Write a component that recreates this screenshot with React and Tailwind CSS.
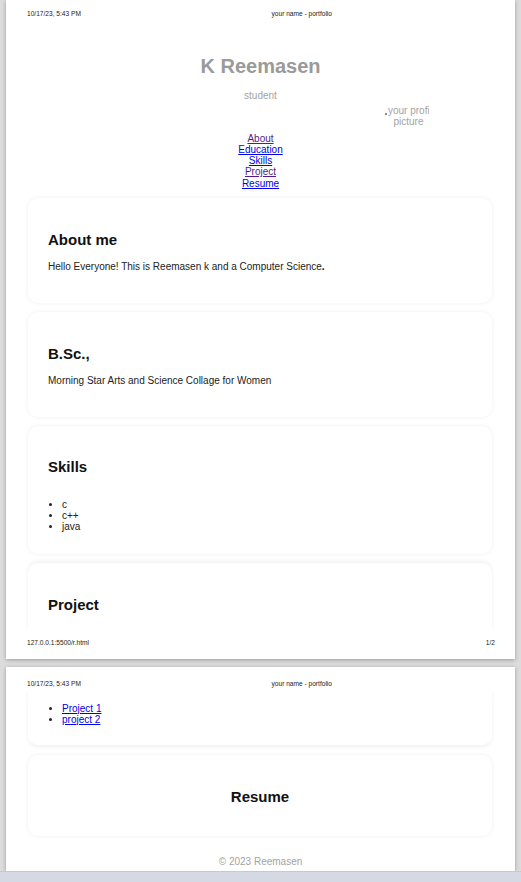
import React from "react";

const navLinks = [
    { label: "About", visited: true },
    { label: "Education", visited: false },
    { label: "Skills", visited: false },
    { label: "Project", visited: true },
    { label: "Resume", visited: false },
];

const skills = ["c", "c++", "java"];

function PrintHeader() {
    return (
        <div className="flex justify-between px-[21px] text-[6.6px] leading-[8px] text-[#222]">
            <span>10/17/23, 5:43 PM</span>
            <span className="mr-[162px]">your name - portfolio</span>
        </div>
    );
}

function Card({ title, children, className = "" }) {
    return (
        <div className={`ml-[22px] w-[464px] rounded-[10px] bg-white pl-[20px] shadow-[0_0_4px_rgba(0,0,0,0.07)] ${className}`}>
            <h2 className="text-[15px] font-bold leading-[17px] text-[#111]">{title}</h2>
            {children}
        </div>
    );
}

export default function App() {
    return (
        <div className="flex h-[882px] w-[521px] flex-col overflow-hidden bg-[#dcdcdc] font-['Liberation_Sans',Arial,sans-serif]">
            <div className="flex flex-1 flex-col gap-[8px] overflow-hidden px-[6px]">
                {/* page 1 */}
                <div className="flex h-[659px] shrink-0 flex-col overflow-hidden bg-white pt-[10px] shadow-[0_1px_4px_rgba(0,0,0,0.3)]">
                    <PrintHeader />

                    <h1 className="mt-[36.5px] text-center text-[20px] font-bold leading-[23px] text-[#9a9a9a]">K Reemasen</h1>
                    <p className="mt-[12.5px] text-center text-[10px] leading-[11.5px] text-[#a3a3a3]">student</p>

                    {/* broken profile image, alt text clipped by the image box */}
                    <div className="ml-[379px] mt-[3px] flex h-[22px] w-[44px] items-start overflow-hidden">
                        <span className="mt-[8px] h-[2px] w-[2px] shrink-0 bg-[#8a8a8a]" />
                        <div className="ml-[1px] flex w-[41px] shrink-0 flex-col text-[10px] leading-[11px] text-[#a3a3a3]">
                            <span className="whitespace-nowrap">your profile</span>
                            <span className="text-center">picture</span>
                        </div>
                    </div>

                    <nav className="mt-[6px] flex flex-col items-center text-[10px] leading-[11.3px]">
                        {navLinks.map(l => (
                            <a key={l.label} href="#" className={`underline ${l.visited ? 'text-[#551a8b]' : 'text-[#0000ee]'}`}>{l.label}</a>
                        ))}
                    </nav>

                    <div className="mt-[9px] flex flex-col gap-[9px]">
                        <Card title="About me" className="h-[105px] pt-[33.5px]">
                            <p className="mt-[12.5px] text-[10px] leading-[11.5px] text-[#222]">
                                Hello Everyone! This is Reemasen k and a Computer Science<b className="text-black">.</b>
                            </p>
                        </Card>
                        <Card title="B.Sc.," className="h-[105px] pt-[33.5px]">
                            <p className="mt-[12.5px] text-[10px] leading-[11.5px] text-[#222]">
                                Morning Star Arts and Science Collage for Women
                            </p>
                        </Card>
                        <Card title="Skills" className="h-[128px] pt-[32.5px]">
                            <ul className="mt-[23.5px] list-disc pl-[14px] text-[10px] leading-[11px] text-[#222]">
                                {skills.map(s => <li key={s}>{s}</li>)}
                            </ul>
                        </Card>
                        <div className="ml-[22px] h-[70px] w-[464px] rounded-t-[10px] bg-white pl-[20px] pt-[33.5px] shadow-[0_-2px_4px_rgba(0,0,0,0.06)]">
                            <h2 className="text-[15px] font-bold leading-[17px] text-[#111]">Project</h2>
                        </div>
                    </div>

                    <div className="mt-[6px] flex justify-between pl-[21px] pr-[20px] text-[6.6px] leading-[8px] text-[#222]">
                        <span>127.0.0.1:5500/r.html</span>
                        <span>1/2</span>
                    </div>
                </div>

                {/* page 2 */}
                <div className="flex flex-1 flex-col bg-white pt-[13px] shadow-[0_1px_4px_rgba(0,0,0,0.3)]">
                    <PrintHeader />

                    <div className="ml-[22px] mt-[3px] h-[54px] w-[464px] rounded-b-[10px] bg-white pl-[20px] pt-[11.5px] shadow-[0_2px_4px_rgba(0,0,0,0.06)]">
                        <ul className="list-disc pl-[14px] text-[10px] leading-[11px] text-[#222]">
                            <li><a href="#" className="text-[#0000ee] underline">Project 1</a></li>
                            <li><a href="#" className="text-[#0000ee] underline">project 2</a></li>
                        </ul>
                    </div>

                    <div className="ml-[22px] mt-[10px] h-[81px] w-[464px] rounded-[10px] bg-white pt-[32.5px] shadow-[0_0_4px_rgba(0,0,0,0.07)]">
                        <h2 className="text-center text-[15px] font-bold leading-[17px] text-[#111]">Resume</h2>
                    </div>

                    <p className="mt-[20px] text-center text-[10px] leading-[11.5px] text-[#a3a3a3]">© 2023 Reemasen</p>
                </div>
            </div>
            <div className="h-[11px] shrink-0 border-t border-[#c5c9d4] bg-[#d5d9e4]" />
        </div>
    );
}
